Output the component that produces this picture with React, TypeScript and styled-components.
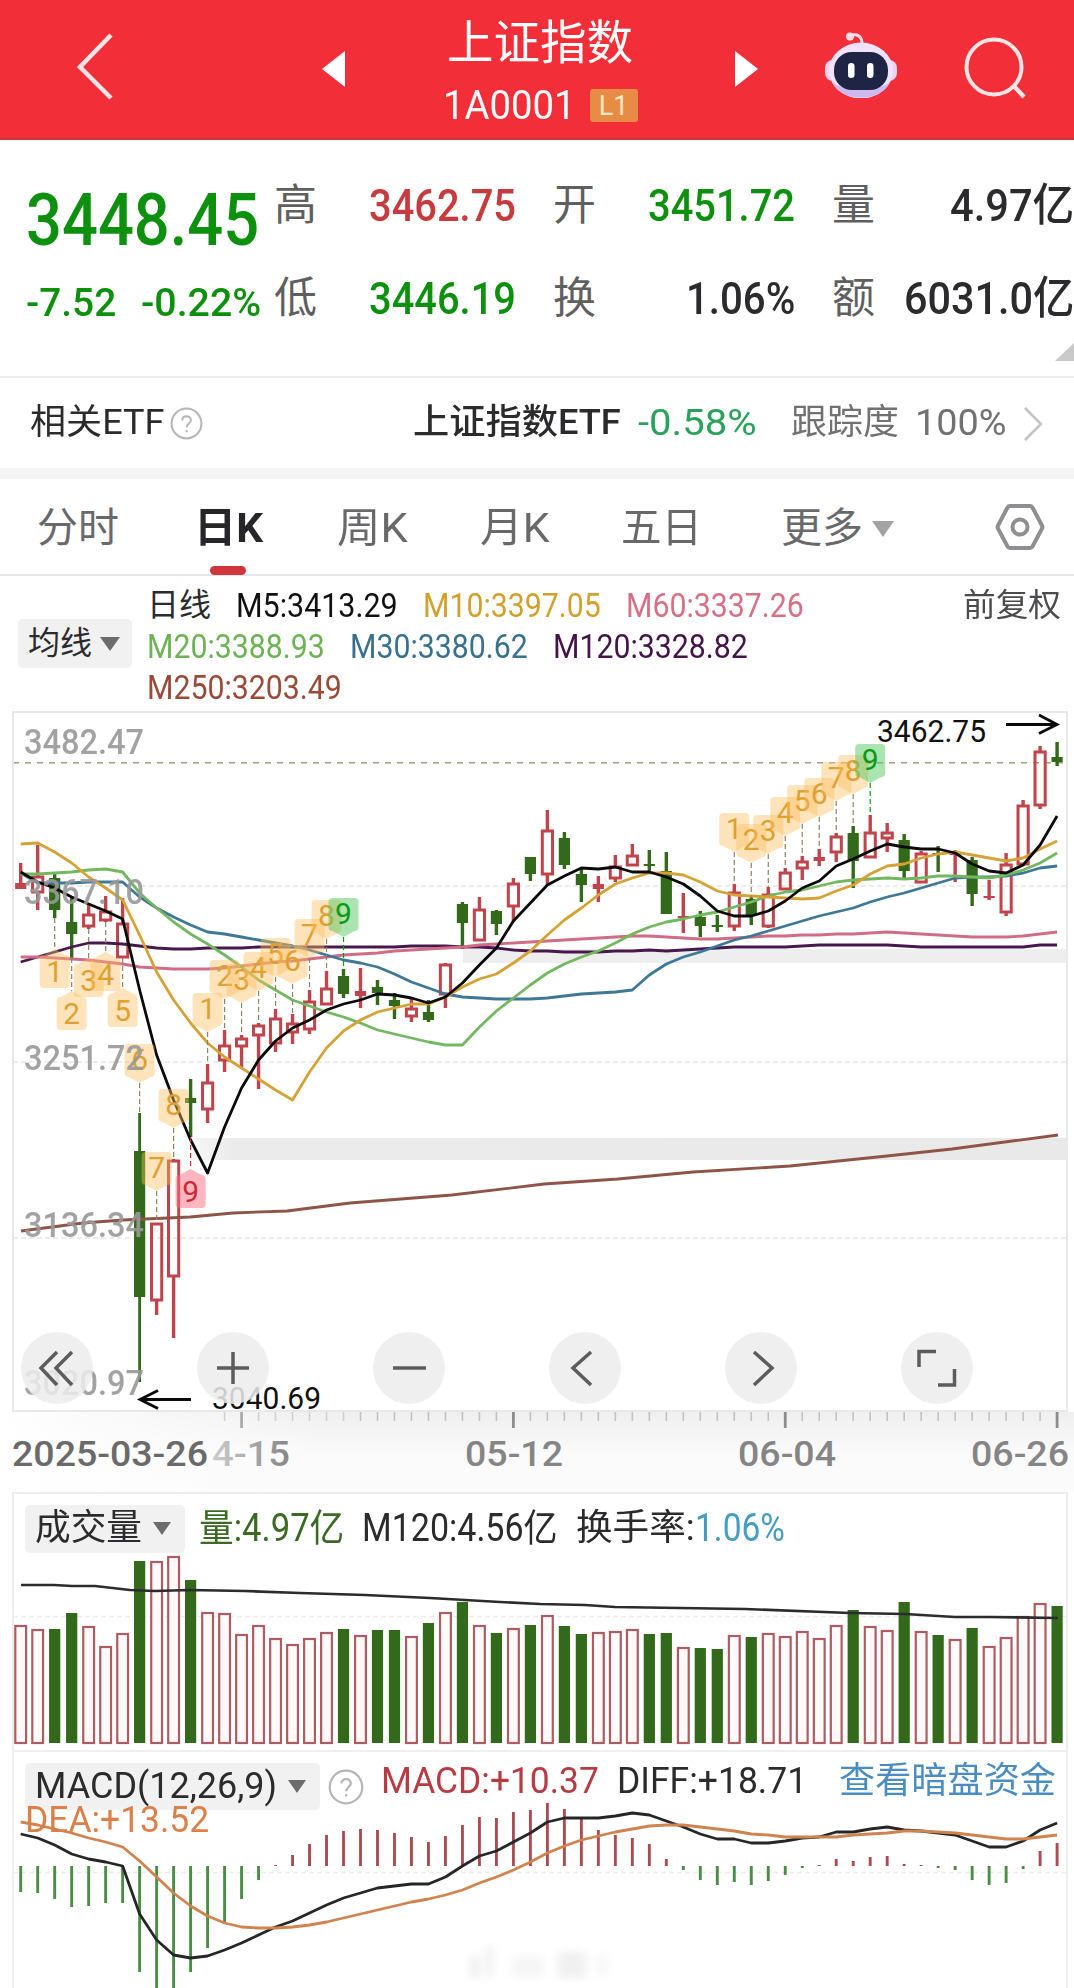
import { ReactNode, useLayoutEffect, useRef, useState } from "react";
import styled, { createGlobalStyle, css } from "styled-components";

const FONT = `Roboto, "Noto Sans CJK SC", sans-serif`;

const RED = "#c0444b";
const GREEN = "#33691a";

/* ---------- data ---------- */

// [high, body top, body bottom, low, rising, filled]
type Candle = [number, number, number, number, number, number?];

const candles: Candle[] = [
  [863, 883, 889, 889, 1, 1],
  [845, 876, 893, 910, 1],
  [874, 878, 910, 918, 0],
  [897, 922, 934, 958, 0],
  [903, 914, 927, 929, 1],
  [896, 911, 921, 922, 1],
  [898, 923, 958, 958, 1],
  [1113, 1151, 1297, 1382, 0],
  [1223, 1223, 1301, 1315, 1],
  [1159, 1160, 1277, 1338, 1],
  [1079, 1098, 1103, 1137, 0],
  [1064, 1082, 1110, 1123, 1],
  [1030, 1045, 1061, 1072, 1],
  [1035, 1038, 1047, 1067, 1],
  [1023, 1025, 1036, 1089, 1],
  [1009, 1018, 1044, 1052, 1],
  [1014, 1023, 1033, 1044, 1],
  [990, 1001, 1030, 1034, 1],
  [971, 988, 1005, 1005, 1],
  [969, 976, 994, 998, 0],
  [968, 991, 996, 1008, 1, 1],
  [980, 987, 993, 1005, 0],
  [993, 1000, 1006, 1019, 0],
  [997, 1008, 1017, 1022, 1],
  [1000, 1012, 1020, 1022, 0],
  [963, 964, 995, 1008, 1],
  [902, 904, 923, 949, 0],
  [897, 909, 941, 941, 1],
  [910, 911, 924, 935, 0],
  [878, 883, 907, 922, 1],
  [857, 857, 874, 881, 0],
  [810, 830, 875, 885, 1],
  [832, 838, 865, 869, 0],
  [867, 874, 885, 902, 0],
  [876, 884, 889, 902, 1, 1],
  [855, 866, 879, 882, 1],
  [844, 855, 866, 866, 1],
  [850, 864, 866, 872, 0],
  [852, 871, 914, 914, 0],
  [893, 916, 918, 933, 1, 1],
  [911, 917, 926, 937, 0],
  [915, 925, 927, 932, 0],
  [884, 892, 927, 931, 1],
  [897, 899, 916, 925, 0],
  [887, 894, 927, 928, 1],
  [868, 872, 890, 890, 1],
  [856, 861, 869, 880, 1],
  [849, 857, 861, 866, 1, 1],
  [833, 836, 853, 862, 1],
  [826, 833, 861, 888, 0],
  [815, 832, 858, 858, 1],
  [823, 832, 839, 852, 1],
  [834, 840, 871, 880, 0],
  [851, 853, 883, 883, 1],
  [846, 853, 855, 872, 0],
  [850, 852, 855, 882, 1, 1],
  [857, 860, 894, 906, 0],
  [880, 896, 898, 900, 1, 1],
  [853, 864, 913, 916, 1],
  [800, 805, 865, 865, 1],
  [746, 751, 806, 809, 1],
  [742, 757, 762, 766, 0],
];

const m5 = [
  872, 882, 888, 897, 904, 911, 919, 990, 1055, 1100, 1140, 1173, 1127, 1088,
  1060, 1041, 1028, 1020, 1010, 1004, 1000, 994, 995, 998, 1003, 997, 983, 965,
  948, 921, 903, 885, 876, 868, 869, 867, 872, 872, 877, 884, 896, 911, 916,
  916, 911, 901, 888, 881, 866, 859, 851, 844, 847, 849, 849, 853, 864, 871,
  873, 865, 845, 816,
];
const m10 = [
  844, 843, 852, 863, 877, 888, 900, 935, 972, 1000, 1023, 1043, 1057, 1068,
  1079, 1090, 1100, 1072, 1048, 1031, 1020, 1012, 1008, 1004, 1004, 997, 987,
  979, 974, 963, 951, 935, 920, 908, 895, 884, 878, 873, 873, 875, 882, 891,
  895, 896, 897, 898, 899, 898, 891, 885, 874, 866, 864, 858, 854, 852, 855,
  858, 861, 858, 849, 841,
];
const m20 = [
  874, 874, 873, 872, 870, 869, 872, 893, 908, 922, 934, 944, 955, 967, 980,
  990, 1000, 1006, 1012, 1017, 1023, 1030, 1034, 1038, 1042, 1045, 1045, 1027,
  1011, 998, 985, 973, 964, 957, 951, 943, 934, 927, 922, 919, 915, 912, 907,
  902, 896, 892, 890, 886, 882, 880, 879, 878, 879, 878, 876, 876, 877, 878,
  875, 870, 863, 853,
];
const m30 = [
  873, 883, 883, 883, 882, 882, 882, 897, 908, 917, 925, 932, 934, 937, 940,
  943, 946, 950, 955, 960, 963, 967, 974, 982, 988, 994, 997, 998, 999, 999,
  999, 998, 996, 994, 993, 992, 990, 975, 964, 957, 952, 946, 940, 936, 931,
  926, 921, 916, 912, 908, 902, 897, 893, 888, 883, 878, 877, 877, 876, 873,
  868, 866,
];
const m60 = [
  957, 957, 958, 959, 960, 962, 964, 967, 968, 969, 969, 969, 968, 966, 964,
  962, 961, 959, 957, 955, 954, 953, 951, 950, 949, 948, 947, 945, 944, 943,
  942, 941, 940, 939, 938, 937, 936, 936, 937, 938, 939, 939, 938, 937, 936,
  936, 935, 935, 934, 934, 933, 932, 933, 934, 935, 936, 937, 937, 937, 936,
  934, 932,
];
const m120 = [
  962, 957, 952, 947, 943, 943, 944, 946, 948, 949, 949, 948, 948, 948, 947,
  947, 947, 947, 947, 947, 947, 947, 947, 946, 946, 946, 947, 947, 948, 950,
  951, 951, 952, 952, 952, 951, 951, 950, 951, 950, 949, 948, 947, 947, 947,
  947, 946, 945, 945, 945, 945, 945, 946, 947, 947, 947, 947, 947, 947, 947,
  945, 945,
];
const m250 =
  "21,1231 83,1223 123,1220 190,1217 233,1213 287,1211 350,1203 452,1195 544,1184 618,1179 693,1172 790,1166 887,1156 952,1149 1058,1135";

const volumes = [
  1625, 1629, 1629, 1613, 1626, 1646, 1633, 1561, 1561, 1556, 1580, 1612, 1613,
  1634, 1625, 1638, 1644, 1638, 1632, 1629, 1635, 1630, 1630, 1636, 1623, 1612,
  1602, 1625, 1633, 1628, 1625, 1615, 1626, 1634, 1632, 1631, 1629, 1634, 1633,
  1647, 1648, 1649, 1635, 1637, 1633, 1636, 1631, 1638, 1625, 1610, 1626, 1630,
  1602, 1631, 1635, 1639, 1628, 1646, 1637, 1616, 1603, 1606,
];
const volumeAverage =
  "21,1585 54,1585 72,1586 95,1586 130,1590 155,1591 190,1590 245,1591 300,1593 365,1595 430,1598 500,1602 540,1604 585,1605 615,1607 680,1608 745,1609 850,1613 905,1614 955,1617 990,1617 1058,1618";

const macd = [
  1892, 1893, 1899, 1907, 1906, 1903, 1903, 1972, 1995, 1995, 1972, 1948, 1923,
  1899, 1880, 1865, 1855, 1844, 1835, 1831, 1829, 1830, 1833, 1837, 1842, 1836,
  1825, 1817, 1818, 1812, 1810, 1803, 1809, 1819, 1830, 1835, 1838, 1844, 1859,
  1870, 1880, 1885, 1882, 1885, 1881, 1875, 1868, 1865, 1859, 1861, 1857, 1856,
  1864, 1865, 1868, 1870, 1880, 1885, 1883, 1869, 1851, 1843,
];
const diff = [
  1834, 1838, 1845, 1854, 1859, 1862, 1866, 1914, 1940, 1955, 1958, 1956, 1950,
  1943, 1935, 1927, 1921, 1913, 1905, 1898, 1893, 1888, 1886, 1884, 1884, 1877,
  1866, 1856, 1851, 1842, 1833, 1822, 1818, 1818, 1818, 1816, 1813, 1815, 1821,
  1827, 1834, 1839, 1839, 1843, 1843, 1841, 1838, 1837, 1832, 1832, 1829, 1827,
  1830, 1831, 1833, 1835, 1841, 1847, 1847, 1841, 1830, 1823,
];
const dea = [
  1822, 1825, 1829, 1833, 1838, 1842, 1847, 1861, 1877, 1893, 1906, 1916, 1923,
  1927, 1928, 1928, 1927, 1925, 1922, 1918, 1914, 1910, 1906, 1902, 1899, 1895,
  1890, 1883, 1877, 1870, 1862, 1853, 1846, 1840, 1836, 1832, 1829, 1826, 1825,
  1825, 1827, 1829, 1831, 1834, 1835, 1837, 1837, 1837, 1837, 1835, 1834, 1833,
  1831, 1831, 1832, 1833, 1835, 1837, 1839, 1839, 1837, 1835,
];

// [candle index, label, center y, points up, color]
const marks: [number, string, number, number, string?][] = [
  [2, "1", 972, 1],
  [3, "2", 1014, 1],
  [4, "3", 981, 1],
  [5, "4", 975, 1],
  [6, "5", 1011, 1],
  [7, "6", 1060, 0],
  [8, "7", 1168, 0],
  [9, "8", 1105, 0],
  [10, "9", 1192, 1, "red"],
  [11, "1", 1009, 0],
  [12, "2", 976, 0],
  [13, "3", 980, 0],
  [14, "4", 968, 0],
  [15, "5", 954, 0],
  [16, "6", 961, 0],
  [17, "7", 935, 0],
  [18, "8", 916, 0],
  [19, "9", 914, 0, "green"],
  [42, "1", 829, 0],
  [43, "2", 840, 0],
  [44, "3", 831, 0],
  [45, "4", 813, 0],
  [46, "5", 801, 0],
  [47, "6", 794, 0],
  [48, "7", 778, 0],
  [49, "8", 771, 0],
  [50, "9", 760, 0, "green"],
];

const markColors: Record<string, [string, string]> = {
  amber: ["rgba(252, 188, 92, 0.42)", "#dfa032"],
  green: ["rgba(88, 200, 100, 0.5)", "#069a14"],
  red: ["rgba(250, 110, 130, 0.5)", "#c92a38"],
};

const xAt = (i: number) => 20.7 + 16.99 * i;
const toPoints = (ys: number[]) => ys.map((y, i) => `${xAt(i)},${y}`).join(" ");

/* ---------- styles ---------- */

const GlobalStyle = createGlobalStyle`
  * {
    box-sizing: border-box;
  }

  body {
    margin: 0;
    background: #fff;
    font-family: ${FONT};
  }

  svg {
    display: block;
    font-family: ${FONT};
  }
`;

const StyledPage = styled.main`
  width: 1074px;
  height: 1988px;
  overflow: hidden;
  background: #fff;
  color: #2b2b2d;
`;

const StyledFit = styled.span<{
  $width: number;
  $size: number;
  $color?: string;
  $weight?: number;
}>`
  display: inline-block;
  flex: none;
  width: ${({ $width }) => $width}px;
  font-size: ${({ $size }) => $size}px;
  font-weight: ${({ $weight }) => $weight || 400};
  line-height: 1.1;
  white-space: nowrap;
  ${({ $color }) =>
    $color &&
    css`
      color: ${$color};
    `}
`;

const StyledFitInner = styled.span`
  display: inline-block;
  transform-origin: left center;
`;

const StyledHeader = styled.header`
  display: grid;
  grid-template-columns: 318px 92px 260px 92px 62px 1fr;
  align-items: center;
  height: 140px;
  background: #f22f38;
  border-bottom: 2px solid #cf343c;
  color: #fff;
`;

const StyledBack = styled.div`
  padding: 0 0 6px 74px;
`;

const StyledTitle = styled.div`
  display: flex;
  flex-direction: column;
  align-items: center;
  height: 100%;
  padding-top: 17px;
  gap: 15px;
`;

const StyledCode = styled.div`
  display: flex;
  align-items: center;
  gap: 14px;
`;

const StyledLevel = styled.span`
  width: 48px;
  height: 33px;
  border-radius: 3px;
  background: #e78b45;
  color: #ffe9c4;
  font-size: 27px;
  line-height: 34px;
  text-align: center;
`;

const StyledHeaderIcons = styled.div`
  display: flex;
  align-items: center;
  gap: 65px;

  svg:first-child {
    margin-bottom: 11px;
  }
`;

const StyledQuote = styled.section`
  display: flex;
  position: relative;
  height: 236px;
  padding-left: 26px;
`;

const StyledQuoteMain = styled.div`
  display: flex;
  flex-direction: column;
  width: 257px;
  padding-top: 40px;
  gap: 23px;
  color: #0e900f;
`;

const StyledChange = styled.div`
  display: flex;
  gap: 25px;
`;

const StyledQuoteGrid = styled.div`
  display: grid;
  grid-template-columns: 242px 242px 242px;
  grid-template-rows: 50px 50px;
  column-gap: 37px;
  row-gap: 43px;
  padding-top: 41px;
`;

const StyledQuoteItem = styled.div`
  display: flex;
  align-items: center;
  justify-content: space-between;
`;

const StyledCorner = styled.i`
  position: absolute;
  right: 0;
  bottom: 15px;
  border-left: 19px solid transparent;
  border-bottom: 18px solid #c9c9c9;
`;

const StyledEtf = styled.section`
  display: flex;
  align-items: center;
  height: 92px;
  padding: 1px 30px 0 30px;
  border-top: 2px solid #eee;
`;

const StyledSpacer = styled.div`
  flex: 1;
`;

const StyledGap = styled.div<{ $width: number }>`
  flex: none;
  width: ${({ $width }) => $width}px;
`;

const StyledDivider = styled.div`
  height: 11px;
  background: #f5f5f5;
`;

const StyledTabs = styled.nav`
  display: flex;
  align-items: center;
  height: 97px;
  padding: 0 29px 0 37px;
  border-bottom: 2px solid #e6e6e6;
`;

const StyledTab = styled.div<{ $active?: boolean; $after: number }>`
  display: flex;
  position: relative;
  align-items: center;
  height: 100%;
  margin-right: ${({ $after }) => $after}px;
  padding-top: 4px;
  color: ${({ $active }) => ($active ? "#262628" : "#69696b")};

  ${({ $active }) =>
    $active &&
    css`
      &::after {
        content: "";
        position: absolute;
        left: 16px;
        bottom: -1px;
        width: 36px;
        height: 9px;
        border-radius: 5px;
        background: #d0353b;
      }
    `}
`;

const StyledCaret = styled.i<{ $size: number; $color: string }>`
  flex: none;
  border: ${({ $size }) => $size}px solid transparent;
  border-top: ${({ $size }) => $size * 1.45}px solid
    ${({ $color }) => $color};
  border-bottom: 0;
`;

const StyledLegend = styled.section`
  display: flex;
  height: 135px;
  padding-left: 18px;
`;

const StyledLegendRows = styled.div`
  display: flex;
  flex: none;
  flex-direction: column;
  width: 831px;
  padding: 9px 0 0 15px;
`;

const StyledLegendRow = styled.div`
  display: flex;
  align-items: center;
  height: 41px;
  gap: 25px;
`;

const StyledSelect = styled.div<{
  $width: number;
  $height: number;
  $end?: number;
}>`
  display: flex;
  flex: none;
  align-items: center;
  justify-content: space-between;
  width: ${({ $width }) => $width}px;
  height: ${({ $height }) => $height}px;
  padding: 0 ${({ $end }) => $end || 12}px 0 10px;
  border-radius: 5px;
  background: #f1f1f1;
`;

const StyledLegendSelect = styled(StyledSelect)`
  margin-top: 43px;
`;

const StyledAdjust = styled.div`
  padding-top: 12px;
`;

const StyledChart = styled.section`
  position: relative;
  height: 781px;
`;

const StyledControls = styled.div`
  position: absolute;
  top: 621px;
  left: 21px;
  display: flex;
  gap: 104px;
`;

const StyledControl = styled.button`
  display: flex;
  align-items: center;
  justify-content: center;
  width: 72px;
  height: 72px;
  padding: 0;
  border: 0;
  border-radius: 50%;
  background: rgba(236, 236, 236, 0.86);
`;

const StyledPanelHead = styled.div`
  display: flex;
  align-items: center;
  height: 63px;
  margin: 0 6px 0 12px;
  padding: 10px 0 2px 11px;
  border: solid #ededed;
  border-width: 2px 2px 0;
`;

const StyledMacd = styled.section`
  position: relative;
`;

const StyledMacdHead = styled.div`
  position: absolute;
  top: 13px;
  left: 25px;
  display: flex;
  align-items: center;
  height: 47px;
`;

const StyledRaised = styled.div`
  display: flex;
  align-items: center;
  padding-bottom: 10px;
`;

const StyledDea = styled.div`
  position: absolute;
  top: 51px;
  left: 25px;
`;

const StyledLines = styled.svg`
  position: absolute;
  top: 0;
  left: 0;
`;

/* ---------- parts ---------- */

interface FitProps {
  children: ReactNode;
  width: number;
  size: number;
  color?: string;
  weight?: number;
}

// Condenses a label to the given width
const Fit = ({ children, width, size, color, weight }: FitProps) => {
  const inner = useRef<HTMLSpanElement>(null);
  const [scale, setScale] = useState(1);

  useLayoutEffect(() => {
    if (inner.current) setScale(width / inner.current.offsetWidth);
  }, [width, size, children]);

  return (
    <StyledFit $width={width} $size={size} $color={color} $weight={weight}>
      <StyledFitInner ref={inner} style={{ transform: `scaleX(${scale})` }}>
        {children}
      </StyledFitInner>
    </StyledFit>
  );
};

const HelpIcon = ({ size, stroke = "#b5b5b5" }: { size: number; stroke?: string }) => (
  <svg width={size} height={size} viewBox="0 0 36 36" fill="none">
    <circle cx="18" cy="18" r="16.300" stroke={stroke} strokeWidth="2.200" />
    <path
      d="M13.400 14.600c0-6 9.400-6 9.400-.3 0 3.700-4.600 3.800-4.600 7.900M18.200 25v2.600"
      stroke={stroke}
      strokeWidth="2.200"
    />
  </svg>
);

const RobotIcon = () => (
  <svg width="74" height="68" viewBox="0 0 74 68">
    <path d="M26 6c7-3 12 0 12 8" fill="none" stroke="#ffd9e2" strokeWidth="3" />
    <circle cx="26" cy="6.500" r="4" fill="#ffdfe6" />
    <rect x="1" y="30" width="72" height="21" rx="8" fill="#ecd3f0" />
    <ellipse cx="37" cy="40.500" rx="32" ry="28" fill="#efe2fa" />
    <path d="M8 52c9 21 49 21 58 0-10 10-48 10-58 0z" fill="#cfb8ef" />
    <rect x="10" y="22" width="54" height="38" rx="18" fill="#1d2444" />
    <rect x="24" y="33" width="6.500" height="15" rx="3.200" fill="#fff" />
    <rect x="43" y="33" width="6.500" height="15" rx="3.200" fill="#fff" />
  </svg>
);

const Header = () => (
  <StyledHeader>
    <StyledBack>
      <svg width="42" height="68" viewBox="0 0 42 68" fill="none">
        <path d="M37 3 6 35l31 31" stroke="#ffe4e6" strokeWidth="4.500" />
      </svg>
    </StyledBack>
    <svg width="30" height="36" viewBox="0 0 30 36">
      <path d="M27 0v36L4 18z" fill="#fff" />
    </svg>
    <StyledTitle>
      <Fit width={186} size={47}>上证指数</Fit>
      <StyledCode>
        <Fit width={133} size={40}>1A0001</Fit>
        <StyledLevel>L1</StyledLevel>
      </StyledCode>
    </StyledTitle>
    <svg width="92" height="36" viewBox="0 0 92 36">
      <path d="M65 0v36l23-18z" fill="#fff" />
    </svg>
    <i />
    <StyledHeaderIcons>
      <RobotIcon />
      <svg width="64" height="64" viewBox="0 0 64 64" fill="none">
        <circle cx="31" cy="30" r="27.500" stroke="#ffe4e6" strokeWidth="4" />
        <path d="m50 48 11 12" stroke="#ffe4e6" strokeWidth="4.500" />
      </svg>
    </StyledHeaderIcons>
  </StyledHeader>
);

const Quote = () => (
  <StyledQuote>
    <StyledQuoteMain>
      <Fit width={233} size={73} weight={500}>3448.45</Fit>
      <StyledChange>
        <Fit width={90} size={38} weight={500}>-7.52</Fit>
        <Fit width={120} size={38} weight={500}>-0.22%</Fit>
      </StyledChange>
    </StyledQuoteMain>
    <StyledQuoteGrid>
      <StyledQuoteItem>
        <Fit width={43} size={43} color="#5f5f61">高</Fit>
        <Fit width={147} size={45} weight={500} color="#c73a3e">3462.75</Fit>
      </StyledQuoteItem>
      <StyledQuoteItem>
        <Fit width={43} size={43} color="#5f5f61">开</Fit>
        <Fit width={147} size={45} weight={500} color="#0e900f">3451.72</Fit>
      </StyledQuoteItem>
      <StyledQuoteItem>
        <Fit width={43} size={43} color="#5f5f61">量</Fit>
        <Fit width={124} size={45} weight={500}>4.97亿</Fit>
      </StyledQuoteItem>
      <StyledQuoteItem>
        <Fit width={43} size={43} color="#5f5f61">低</Fit>
        <Fit width={147} size={45} weight={500} color="#0e900f">3446.19</Fit>
      </StyledQuoteItem>
      <StyledQuoteItem>
        <Fit width={43} size={43} color="#5f5f61">换</Fit>
        <Fit width={109} size={45} weight={500}>1.06%</Fit>
      </StyledQuoteItem>
      <StyledQuoteItem>
        <Fit width={43} size={43} color="#5f5f61">额</Fit>
        <Fit width={170} size={45} weight={500}>6031.0亿</Fit>
      </StyledQuoteItem>
    </StyledQuoteGrid>
    <StyledCorner />
  </StyledQuote>
);

const EtfBar = () => (
  <StyledEtf>
    <Fit width={134} size={35}>相关ETF</Fit>
    <StyledGap $width={6} />
    <HelpIcon size={33} />
    <StyledSpacer />
    <Fit width={208} size={35} weight={500}>上证指数ETF</Fit>
    <StyledGap $width={17} />
    <Fit width={118} size={37} color="#2ba25c">-0.58%</Fit>
    <StyledGap $width={35} />
    <Fit width={108} size={35} color="#717173">跟踪度</Fit>
    <StyledGap $width={16} />
    <Fit width={91} size={37} color="#717173">100%</Fit>
    <StyledGap $width={17} />
    <svg width="21" height="36" viewBox="0 0 21 36" fill="none">
      <path d="m2 2 16 16L2 34" stroke="#c4c4c4" strokeWidth="2.500" />
    </svg>
  </StyledEtf>
);

const Tabs = () => (
  <StyledTabs>
    <StyledTab $after={75}><Fit width={82} size={41}>分时</Fit></StyledTab>
    <StyledTab $active $after={74}><Fit width={69} size={41} weight={700}>日K</Fit></StyledTab>
    <StyledTab $after={72}><Fit width={71} size={41}>周K</Fit></StyledTab>
    <StyledTab $after={71}><Fit width={70} size={41}>月K</Fit></StyledTab>
    <StyledTab $after={79}><Fit width={81} size={41}>五日</Fit></StyledTab>
    <StyledTab $after={0}>
      <Fit width={82} size={41}>更多</Fit>
      <StyledGap $width={9} />
      <StyledCaret $size={11.5} $color="#a3a3a3" />
    </StyledTab>
    <StyledSpacer />
    <svg width="50" height="50" viewBox="0 0 50 50" fill="none" stroke="#8f8f91" strokeWidth="4">
      <path d="M15 4h20q1.500 0 2.500 1.500L47 23.500q.8 1.500 0 3L37.500 44.500Q36.500 46 35 46H15q-1.500 0-2.500-1.500L3 26.500q-.8-1.500 0-3L12.500 5.500Q13.500 4 15 4z" />
      <circle cx="25" cy="25" r="7.500" />
    </svg>
  </StyledTabs>
);

const Legend = () => (
  <StyledLegend>
    <StyledLegendSelect $width={114} $height={49}>
      <Fit width={64} size={32}>均线</Fit>
      <StyledCaret $size={10} $color="#6c6c6c" />
    </StyledLegendSelect>
    <StyledLegendRows>
      <StyledLegendRow>
        <Fit width={64} size={32}>日线</Fit>
        <Fit width={162} size={34} color="#111">M5:3413.29</Fit>
        <Fit width={178} size={34} color="#d3a02c">M10:3397.05</Fit>
        <Fit width={178} size={34} color="#d76f85">M60:3337.26</Fit>
      </StyledLegendRow>
      <StyledLegendRow>
        <Fit width={178} size={34} color="#6db254">M20:3388.93</Fit>
        <Fit width={178} size={34} color="#38708f">M30:3380.62</Fit>
        <Fit width={195} size={34} color="#431448">M120:3328.82</Fit>
      </StyledLegendRow>
      <StyledLegendRow>
        <Fit width={195} size={34} color="#9a4a38">M250:3203.49</Fit>
      </StyledLegendRow>
    </StyledLegendRows>
    <StyledAdjust>
      <Fit width={98} size={32} color="#4b4b4d">前复权</Fit>
    </StyledAdjust>
  </StyledLegend>
);

const Line = ({ points, color, width = 2.8 }: { points: string; color: string; width?: number }) => (
  <polyline points={points} fill="none" stroke={color} strokeWidth={width} strokeLinejoin="round" />
);

interface LabelProps {
  x: number;
  y: number;
  width: number;
  size: number;
  fill: string;
  weight?: number;
  children: string;
}

const Label = ({ x, y, width, size, fill, weight, children }: LabelProps) => (
  <text
    x={x}
    y={y}
    fontSize={size}
    fontWeight={weight}
    fill={fill}
    textLength={width}
    lengthAdjust="spacingAndGlyphs"
  >
    {children}
  </text>
);

const CandleBar = ({ index, data }: { index: number; data: Candle }) => {
  const [high, top, bottom, low, rising, filled] = data;
  const x = xAt(index);
  const color = rising ? RED : GREEN;

  return (
    <g>
      <path
        d={`M${x} ${high}V${top}M${x} ${bottom}V${low}`}
        stroke={color}
        strokeWidth={index === 7 ? 2.8 : 3.4}
      />
      {rising && !filled ? (
        <rect x={x - 5.1} y={top + 1} width="10.200" height={Math.max(bottom - top - 2, 3)} fill="none" stroke={color} strokeWidth="3" />
      ) : (
        <rect x={x - 5.6} y={top} width="11.200" height={bottom - top} fill={color} />
      )}
    </g>
  );
};

const Mark = ({ data }: { data: (typeof marks)[number] }) => {
  const [index, label, y, up, color = "amber"] = data;
  const [fill, text] = markColors[color];
  const x = xAt(index);
  const [high, , , low] = candles[index];
  const dir = up ? -1 : 1;
  const tip = y + dir * 23;
  const near = y + dir * 17;
  const far = y - dir * 16;
  const r = dir * 4;

  return (
    <g>
      <path
        d={`M${x} ${up ? low : tip}V${up ? tip : high}`}
        stroke={color === "amber" ? "#8d8365" : text}
        strokeWidth="1.200"
        strokeDasharray="5 3"
      />
      <path
        d={`M${x - 11} ${far}H${x + 11}Q${x + 15} ${far} ${x + 15} ${far + r}V${near - r}Q${x + 15} ${near} ${x + 11} ${near}L${x} ${tip}L${x - 11} ${near}Q${x - 15} ${near} ${x - 15} ${near - r}V${far + r}Q${x - 15} ${far} ${x - 11} ${far}z`}
        fill={fill}
      />
      <text x={x} y={y + 10} fontSize="30" fill={text} textAnchor="middle">
        {label}
      </text>
    </g>
  );
};

const PriceChart = () => (
  <StyledChart>
    <svg width="1074" height="781" viewBox="0 711 1074 781">
      <defs>
        <linearGradient id="axisShade" x1="0" y1="0" x2="0" y2="1">
          <stop offset="0" stopColor="#efefef" />
          <stop offset="0.5" stopColor="#fafafa" />
          <stop offset="1" stopColor="#fbfbfb" />
        </linearGradient>
        <linearGradient id="axisFade" x1="0" y1="0" x2="1" y2="0">
          <stop offset="0" stopColor="#fff" />
          <stop offset="1" stopColor="#fff" stopOpacity="0" />
        </linearGradient>
        <linearGradient id="dateFade" gradientUnits="userSpaceOnUse" x1="200" y1="0" x2="290" y2="0">
          <stop offset="0" stopColor="#d8d8d8" />
          <stop offset="1" stopColor="#858585" />
        </linearGradient>
        <linearGradient id="bandFade" x1="0" y1="0" x2="1" y2="0">
          <stop offset="0" stopColor="#f7f7f7" />
          <stop offset="0.05" stopColor="#ebebeb" />
          <stop offset="1" stopColor="#e9e9e9" />
        </linearGradient>
      </defs>

      <rect x="0" y="1412" width="1074" height="80" fill="url(#axisShade)" />
      <rect x="0" y="1412" width="330" height="80" fill="url(#axisFade)" />
      <rect x="463" y="949" width="604" height="14" fill="#eeeeee" />
      <rect x="190" y="1138" width="877" height="22" fill="url(#bandFade)" />

      {[886, 1062, 1238].map((y) => (
        <path key={y} d={`M13 ${y}H1067`} stroke="#e6e6e6" strokeWidth="1.500" strokeDasharray="5 3" />
      ))}
      <path d="M13 762.700H1067" stroke="#a39c7d" strokeWidth="1.600" strokeDasharray="6 6" />
      <rect x="13" y="712" width="1054" height="699" fill="none" stroke="#e8e8e8" strokeWidth="2" />

      {candles.map((candle, i) => (
        <CandleBar key={i} index={i} data={candle} />
      ))}

      <Line points={m250} color="#8f5448" />
      <Line points={toPoints(m120)} color="#47184c" />
      <Line points={toPoints(m60)} color="#d06c86" />
      <Line points={toPoints(m30)} color="#3f7797" />
      <Line points={toPoints(m20)} color="#73b860" />
      <Line points={toPoints(m10)} color="#d6a236" />
      <Line points={toPoints(m5)} color="#0a0a0a" />

      {marks.map((mark) => (
        <Mark key={mark[0]} data={mark} />
      ))}

      <g opacity="0.9">
        <Label x={24} y={754} width={120} size={35} weight={500} fill="#999">3482.47</Label>
        <Label x={24} y={904} width={120} size={35} weight={500} fill="#999">3367.10</Label>
        <Label x={24} y={1070} width={120} size={35} weight={500} fill="#999">3251.72</Label>
        <Label x={24} y={1237} width={120} size={35} weight={500} fill="#999">3136.34</Label>
        <Label x={24} y={1395} width={120} size={35} weight={500} fill="#999">3020.97</Label>
      </g>

      <Label x={877} y={742} width={109} size={31} fill="#111">3462.75</Label>
      <path d="M1006 724.500H1056M1039 715l18 9.500-18 9" fill="none" stroke="#0a0a0a" strokeWidth="2.800" />
      <Label x={212} y={1409} width={109} size={31} fill="#111">3040.69</Label>
      <path d="M191 1399.500H141M158 1390.500l-18 9 18 9" fill="none" stroke="#0a0a0a" strokeWidth="2.800" />

      {candles.map((_, i) =>
        i < 12 ? null : (
          <path
            key={i}
            d={`M${xAt(i)} 1412V${(i - 13) % 16 === 0 ? 1428 : 1421}`}
            stroke={(i - 13) % 16 === 0 ? "#8d8d8d" : "#c2c2c2"}
            strokeWidth={(i - 13) % 16 === 0 ? 2.8 : 1.6}
            opacity={i < 20 ? 0.7 : 1}
          />
        )
      )}
      <Label x={12} y={1466} width={196} size={35} weight={500} fill="#6a6a6a">2025-03-26</Label>
      <Label x={212} y={1466} width={78} size={35} weight={500} fill="url(#dateFade)">4-15</Label>
      <Label x={465} y={1466} width={98} size={35} weight={500} fill="#858585">05-12</Label>
      <Label x={738} y={1466} width={98} size={35} weight={500} fill="#858585">06-04</Label>
      <Label x={971} y={1466} width={98} size={35} weight={500} fill="#858585">06-26</Label>
    </svg>

    <StyledControls>
      {[
        "M36 20 20 36l16 17M51 20 35 36l16 17",
        "M20 36h32M36 20v32",
        "M20 36h33",
        "M42 20 24 36l18 17",
        "M29 20l18 16-18 17",
        "M18 35V19.500H35M37 53h16.500V37",
      ].map((d) => (
        <StyledControl key={d}>
          <svg width="72" height="72" viewBox="0 0 72 72" fill="none">
            <path d={d} stroke="#5c5c5c" strokeWidth="3.500" />
          </svg>
        </StyledControl>
      ))}
    </StyledControls>
  </StyledChart>
);

const VolumePanel = () => (
  <section>
    <StyledPanelHead>
      <StyledSelect $width={160} $height={48} $end={14}>
        <Fit width={107} size={36}>成交量</Fit>
        <StyledCaret $size={9.5} $color="#6c6c6c" />
      </StyledSelect>
      <StyledGap $width={14} />
      <Fit width={145} size={38} color="#3a6a24">量:4.97亿</Fit>
      <StyledGap $width={18} />
      <Fit width={196} size={38}>M120:4.56亿</Fit>
      <StyledGap $width={18} />
      <Fit width={119} size={36}>换手率:</Fit>
      <Fit width={90} size={38} color="#459dc4">1.06%</Fit>
    </StyledPanelHead>
    <svg width="1074" height="195" viewBox="0 1555 1074 195">
      <path d="M13 1555V1750M1067 1555V1750" stroke="#ededed" strokeWidth="2" />
      <path d="M13 1616.500H1067" stroke="#ececec" strokeWidth="1.500" strokeDasharray="5 3" />
      {volumes.map((top, i) =>
        candles[i][4] ? (
          <rect key={i} x={xAt(i) - 5.4} y={top + 1} width="10.800" height={1742 - top} fill="#fffafa" stroke="#ae5c62" strokeWidth="2.200" />
        ) : (
          <rect key={i} x={xAt(i) - 5.6} y={top} width="11.200" height={1743 - top} fill={GREEN} />
        )
      )}
      <Line points={volumeAverage} color="#2c2c2e" width={2.6} />
    </svg>
  </section>
);

const MacdPanel = () => (
  <StyledMacd>
    <svg width="1074" height="238" viewBox="0 1750 1074 238">
      <defs>
        <filter id="soft">
          <feGaussianBlur stdDeviation="4" />
        </filter>
      </defs>
      <path d="M13 1988V1751H1067V1988" fill="none" stroke="#efefef" strokeWidth="2" />
      <path d="M13 1872.500H1067" stroke="#ececec" strokeWidth="1.500" strokeDasharray="5 3" />
      <g filter="url(#soft)" fill="#f0f0f0">
        <rect x="470" y="1956" width="10" height="22" />
        <rect x="486" y="1946" width="7" height="32" />
        <rect x="512" y="1956" width="32" height="22" opacity="0.6" />
        <rect x="558" y="1952" width="28" height="26" />
        <rect x="596" y="1954" width="12" height="22" opacity="0.5" />
      </g>
      {macd.map((y, i) => (
        <path
          key={i}
          d={`M${xAt(i)} 1866V${y}`}
          stroke={y > 1866 ? "#4b8d45" : "#ac4c52"}
          strokeWidth="2.900"
        />
      ))}
    </svg>
    <StyledMacdHead>
      <StyledSelect $width={295} $height={47} $end={14}>
        <Fit width={242} size={37}>MACD(12,26,9)</Fit>
        <StyledCaret $size={9.5} $color="#6c6c6c" />
      </StyledSelect>
      <StyledGap $width={8} />
      <HelpIcon size={36} />
      <StyledGap $width={17} />
      <StyledRaised>
        <Fit width={218} size={37} color="#b83a42">MACD:+10.37</Fit>
        <StyledGap $width={18} />
        <Fit width={190} size={37}>DIFF:+18.71</Fit>
        <StyledGap $width={32} />
        <Fit width={217} size={36} color="#4b8dc2">查看暗盘资金</Fit>
      </StyledRaised>
    </StyledMacdHead>
    <StyledDea>
      <Fit width={184} size={36} color="#dc8048">DEA:+13.52</Fit>
    </StyledDea>
    <StyledLines width="1074" height="238" viewBox="0 1750 1074 238">
      <Line points={toPoints(diff)} color="#262628" />
      <Line points={toPoints(dea)} color="#d0824f" />
    </StyledLines>
  </StyledMacd>
);

const App = () => (
  <StyledPage>
    <GlobalStyle />
    <Header />
    <Quote />
    <EtfBar />
    <StyledDivider />
    <Tabs />
    <Legend />
    <PriceChart />
    <VolumePanel />
    <MacdPanel />
  </StyledPage>
);

export default App;
